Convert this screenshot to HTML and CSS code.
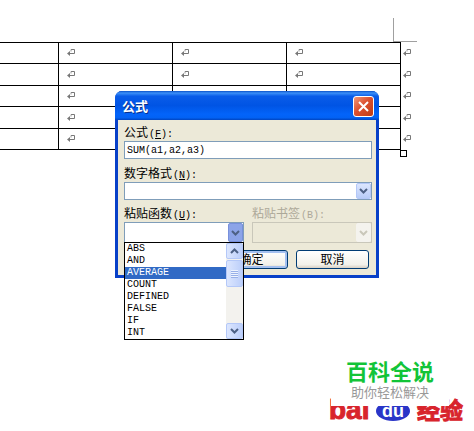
FILE: index.html
```html
<!DOCTYPE html>
<html lang="zh-CN">
<head>
<meta charset="utf-8">
<title>公式</title>
<link rel="stylesheet" href="styles.css">
</head>
<body>
<svg class="defs" aria-hidden="true">
  <symbol id="mark" viewBox="0 0 8 8"><path d="M4 .5h3.500v4H1" fill="none" stroke="#777"/><path d="M4 .5v2" stroke="#999"/><path d="M0 4.500L3 2v5z" fill="#777"/></symbol>
  <symbol id="down" viewBox="0 0 9 6"><path d="M1 1l3.500 3.500L8 1" fill="none" stroke="currentColor" stroke-width="2"/></symbol>
  <symbol id="up" viewBox="0 0 9 6"><path d="M1 5l3.500-3.500L8 5" fill="none" stroke="currentColor" stroke-width="2"/></symbol>
</svg>
<main class="page">
  <div class="corner"></div>
  <table class="grid">
    <colgroup><col><col class="c"><col class="c"><col class="c"><col class="end"></colgroup>
    <tbody>
    <tr><td></td><td><svg><use href="#mark"/></svg></td><td><svg><use href="#mark"/></svg></td><td><svg><use href="#mark"/></svg></td><td><svg><use href="#mark"/></svg></td></tr>
    <tr><td></td><td><svg><use href="#mark"/></svg></td><td><svg><use href="#mark"/></svg></td><td><svg><use href="#mark"/></svg></td><td><svg><use href="#mark"/></svg></td></tr>
    <tr><td></td><td><svg><use href="#mark"/></svg></td><td><svg><use href="#mark"/></svg></td><td><svg><use href="#mark"/></svg></td><td><svg><use href="#mark"/></svg></td></tr>
    <tr><td></td><td><svg><use href="#mark"/></svg></td><td><svg><use href="#mark"/></svg></td><td><svg><use href="#mark"/></svg></td><td><svg><use href="#mark"/></svg></td></tr>
    <tr><td></td><td><svg><use href="#mark"/></svg></td><td><svg><use href="#mark"/></svg></td><td><svg><use href="#mark"/></svg></td><td><svg><use href="#mark"/></svg></td></tr>
    </tbody>
  </table>
  <div class="handle"></div>
</main>

<section class="dialog" role="dialog" aria-labelledby="title">
  <header class="titlebar">
    <h1 id="title">公式</h1>
    <button class="close" type="button" aria-label="关闭"><svg viewBox="0 0 11 11"><path d="M1 1l9 9M10 1l-9 9" stroke="#fff" stroke-width="2"/></svg></button>
  </header>
  <form class="body">
    <label for="formula">公式<span class="key">(<u>F</u>):</span></label>
    <input id="formula" class="box" type="text" value="SUM(a1,a2,a3)">
    <label for="format">数字格式<span class="key">(<u>N</u>):</span></label>
    <div class="combo">
      <select id="format" class="box"><option></option></select>
      <span class="arrow"><svg><use href="#down"/></svg></span>
    </div>
    <div class="pair">
      <div class="field">
        <label for="func">粘贴函数<span class="key">(<u>U</u>):</span></label>
        <div class="combo tall open">
          <select id="func" class="box"><option></option></select>
          <span class="arrow"><svg><use href="#down"/></svg></span>
          <div class="menu">
            <select class="list" size="8" aria-label="粘贴函数">
              <option>ABS</option><option>AND</option><option selected>AVERAGE</option><option>COUNT</option><option>DEFINED</option><option>FALSE</option><option>IF</option><option>INT</option>
            </select>
            <div class="scroll">
              <span class="step"><svg><use href="#up"/></svg></span>
              <span class="thumb"></span>
              <span class="step last"><svg><use href="#down"/></svg></span>
            </div>
          </div>
        </div>
      </div>
      <div class="field off">
        <label for="bookmark">粘贴书签<span class="key">(B):</span></label>
        <div class="combo tall">
          <select id="bookmark" class="box" disabled><option></option></select>
          <span class="arrow"><svg><use href="#down"/></svg></span>
        </div>
      </div>
    </div>
    <div class="actions">
      <button class="btn default" type="button">确定</button>
      <button class="btn" type="button">取消</button>
    </div>
  </form>
</section>

<aside class="brand">
  <div class="logo">
    <span>bai</span>
    <svg class="paw" viewBox="0 0 34 22"><ellipse cx="17" cy="12" rx="17" ry="10" fill="#2a35c8"/><text x="17" y="18" text-anchor="middle">du</text></svg>
    <span class="cn">经验</span>
  </div>
  <div class="stamp"><strong>百科全说</strong><span>助你轻松解决</span></div>
</aside>
</body>
</html>
```
FILE: styles.css
```css
* { box-sizing: border-box; }
body {
  margin: 0;
  min-height: 100vh;
  position: relative;
  overflow: hidden;
  background: #fff;
  color: #000;
  font: 12px/14px "Liberation Sans", "Noto Sans CJK SC", sans-serif;
}
svg { display: block; }
.defs { position: absolute; width: 0; height: 0; }

.page { padding: 18px 57px 0 0; }
.corner {
  width: 24px;
  height: 24px;
  margin-left: auto;
  border: solid #a0a0a0;
  border-width: 0 0 1px 1px;
}
.grid {
  width: 100%;
  table-layout: fixed;
  border-collapse: collapse;
}
.grid .c { width: 114px; }
.grid .end { width: 17px; }
.grid td {
  height: 21px;
  padding: 0 0 0 8px;
  border: 1px solid #000;
}
.grid tr:nth-child(even) td { height: 22px; }
.grid td:first-child { border-left: 0; }
.grid td:last-child { border-width: 0 0 0 1px; padding-left: 2px; }
.grid svg { width: 8px; height: 8px; }
.handle {
  width: 7px;
  height: 7px;
  margin: 0 10px 0 auto;
  border: 1px solid #000;
}

.dialog {
  position: absolute;
  left: 115px;
  top: 91px;
  width: 264px;
  border: solid #0840c8;
  border-width: 0 3px 3px;
  border-radius: 7px 7px 0 0;
  background: #0840c8;
}
.titlebar {
  display: flex;
  align-items: center;
  justify-content: space-between;
  height: 29px;
  margin: 0 -3px;
  padding: 2px 5px 0 7px;
  border-radius: 7px 7px 0 0;
  background: linear-gradient(#0a50c8, #3c90f8 7%, #0a5ce8 18%, #0054e4 50%, #0364fa 80%, #0262f4 92%, #0044c0);
}
.titlebar h1 {
  margin: 0;
  color: #fff;
  font-size: 13px;
  text-shadow: 1px 1px #08308c;
}
.close {
  display: grid;
  place-items: center;
  width: 21px;
  height: 21px;
  padding: 0;
  border: 1px solid #fff;
  border-radius: 3px;
  background: linear-gradient(135deg, #f09878, #dc5030 45%, #c03c14);
}
.close svg { width: 11px; height: 11px; }

.body {
  padding: 6px 4px 6px 6px;
  background: #ece9d8;
}
label { display: block; height: 15px; line-height: 14px; }
.key, .list, #formula { font-family: "Liberation Mono", monospace; font-size: 10px; }
.key { margin-left: 1px; }
.box {
  display: block;
  width: 100%;
  height: 18px;
  margin: 0;
  padding: 0 2px;
  appearance: none;
  border: 1px solid #7f9db9;
  border-radius: 0;
  background: #fff;
  color: #000;
  outline: 0;
}
#formula { margin-bottom: 8px; }
.combo { position: relative; margin-bottom: 7px; }
.tall .box { height: 21px; }
.arrow {
  position: absolute;
  top: 1px;
  right: 1px;
  bottom: 1px;
  display: grid;
  place-items: center;
  width: 15px;
  border: 1px solid #b4c8f8;
  border-radius: 2px;
  background: linear-gradient(#dce6fe, #b8ccf8);
  color: #4d6185;
  pointer-events: none;
}
.combo svg { width: 9px; height: 6px; }
.open > .arrow { background: #8ca4e8; border-color: #7890dc; }
.pair { display: grid; grid-template-columns: 1fr 1fr; gap: 8px; }
.off { color: #aca899; }
.off .box { border-color: #c9c7ba; background: #ece9d8; opacity: 1; }
.off .arrow { border-color: #f4f3ee; background: #f4f3ee; color: #c9c7ba; }

.menu {
  position: absolute;
  z-index: 2;
  top: 20px;
  left: 0;
  right: 0;
  display: flex;
  border: 1px solid #000;
  background: #fff;
}
.list {
  flex: 1;
  height: 96px;
  margin: 0;
  padding: 0;
  overflow: hidden;
  border: 0;
  border-radius: 0;
  outline: 0;
  background: #fff;
  color: #000;
}
.list option { height: 12px; min-height: 12px; padding: 0 2px; line-height: 12px; }
.list option:checked {
  background: linear-gradient(#316ac5, #316ac5);
  -webkit-text-fill-color: #fff;
}
.scroll {
  display: flex;
  flex-direction: column;
  width: 17px;
  background: #f3f2ee;
}
.step, .thumb {
  display: grid;
  place-items: center;
  height: 16px;
  border: 1px solid #b4c8f8;
  border-radius: 2px;
  background: linear-gradient(90deg, #dce6fe, #bccffa);
  color: #4d6185;
}
.thumb { height: 27px; margin-top: 1px; }
.thumb::before {
  content: "";
  width: 7px;
  height: 8px;
  background: repeating-linear-gradient(#eef4fe 0 1px, #98b0e8 1px 2px);
}
.last { margin-top: auto; }

.actions {
  display: flex;
  justify-content: flex-end;
  gap: 8px;
  margin-right: 3px;
}
.btn {
  width: 73px;
  height: 19px;
  padding: 0;
  border: 1px solid #003c74;
  border-radius: 3px;
  background: linear-gradient(#fff, #f2f1ea 80%, #d8d0c4);
  color: #000;
  font: inherit;
  line-height: 16px;
}
.default { box-shadow: inset 0 0 0 2px #a4c0f0; }

.brand {
  position: absolute;
  right: 11px;
  bottom: 6px;
  width: 134px;
  height: 64px;
}
.logo {
  position: absolute;
  inset: auto 0 0;
  display: flex;
  align-items: flex-end;
  justify-content: space-between;
  color: #d8242c;
  font-size: 28px;
  font-weight: bold;
  line-height: 30px;
  -webkit-text-stroke: 1px #d8242c;
}
.logo .cn { font-size: 23px; line-height: 28px; }
.paw { width: 34px; height: 22px; margin-bottom: 4px; -webkit-text-stroke: 0; }
.paw text { fill: #fff; font-size: 18px; }
.stamp {
  position: absolute;
  top: 0;
  left: 2px;
  display: flex;
  flex-direction: column;
  align-items: center;
  width: 118px;
  height: 45px;
  background: #fff;
}
.stamp strong { color: #12c438; font-size: 22px; font-weight: bold; line-height: 24px; }
.stamp span { color: #999; font-size: 13px; line-height: 16px; }
```
